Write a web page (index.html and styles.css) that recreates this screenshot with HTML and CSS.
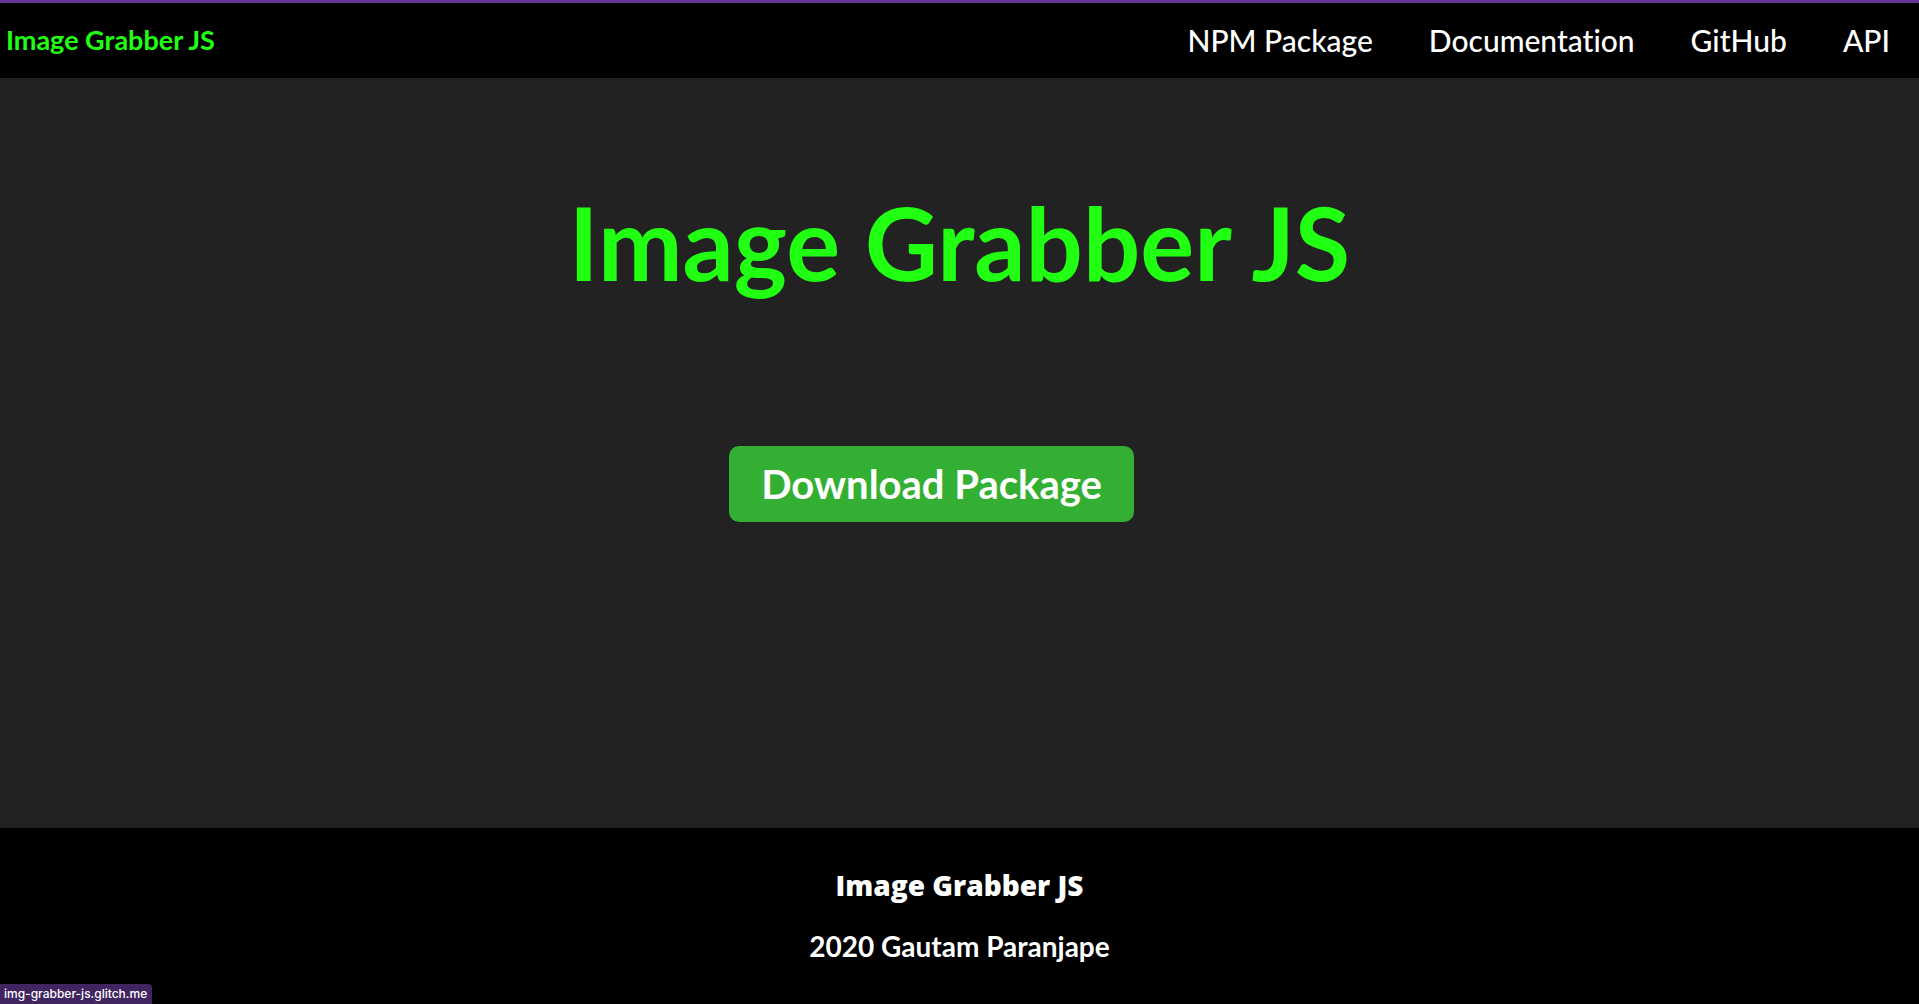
FILE: index.html
```html
<!DOCTYPE html>
<html lang="en">
<head>
<meta charset="utf-8">
<title>Image Grabber JS</title>
<link rel="stylesheet" href="styles.css">
</head>
<body>
<header class="topbar">
  <a class="brand" href="#">Image Grabber JS</a>
  <nav class="links">
    <a href="#">NPM Package</a>
    <a href="#">Documentation</a>
    <a href="#">GitHub</a>
    <a href="#">API</a>
  </nav>
</header>
<main class="hero">
  <h1 class="title">Image Grabber JS</h1>
  <button class="download" type="button">Download Package</button>
</main>
<footer class="footer">
  <p class="footer-name">Image Grabber JS</p>
  <p class="footer-author">2020 Gautam Paranjape</p>
</footer>
<div class="status">img-grabber-js.glitch.me</div>
</body>
</html>
```
FILE: styles.css
```css
* {
  box-sizing: border-box;
}

body {
  margin: 0;
  min-height: 100vh;
  display: flex;
  flex-direction: column;
  background: #222;
  color: #fff;
  font-family: Lato, sans-serif;
  font-variant-ligatures: none;
}

a {
  color: inherit;
  text-decoration: none;
}

.topbar {
  display: flex;
  justify-content: space-between;
  align-items: center;
  padding: 16px 29px 17px 6px;
  border-top: 3px solid #663399;
  background: #000;
}

.brand {
  color: #21ff12;
  font-size: 27px;
  font-weight: 700;
  line-height: 40px;
}

.links {
  display: flex;
  gap: 56px;
  font-size: 30px;
  font-weight: 500;
  line-height: 42px;
}

.hero {
  flex: 1;
  display: flex;
  flex-direction: column;
  align-items: center;
  padding-top: 104px;
}

.title {
  margin: 0 0 144px;
  color: #21ff12;
  font-size: 101px;
  font-weight: 700;
  line-height: 120px;
}

.download {
  margin-right: 56px;
  padding: 13px 32px;
  border: 0;
  border-radius: 10px;
  background: #33b033;
  color: #fff;
  font-family: inherit;
  font-size: 40px;
  font-weight: 700;
  line-height: 50px;
}

.footer {
  padding: 40px 0 41px;
  background: #000;
  text-align: center;
  font-size: 28px;
  line-height: 34px;
}

.footer-name {
  margin: 0 0 27px;
  font-family: "Gill Sans", "Open Sans", sans-serif;
  font-weight: 800;
}

.footer-author {
  margin: 0;
  font-weight: 700;
}

.status {
  position: fixed;
  left: 0;
  bottom: 0;
  padding: 0 5px 0 4px;
  border-top-right-radius: 4px;
  background: #402560;
  font-family: Inter, sans-serif;
  font-size: 12px;
  font-weight: 500;
  line-height: 20px;
}
```
